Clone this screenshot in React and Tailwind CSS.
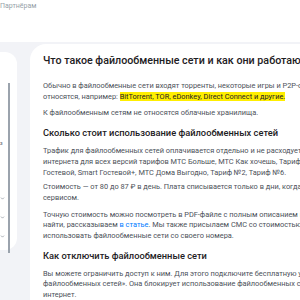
import React from 'react';
import { ChevronDown } from 'lucide-react';

const FONT = { fontFamily: 'Roboto, "Noto Sans", sans-serif' };

function Line({ children }) {
  return <div className="whitespace-nowrap leading-[10.7px]">{children}</div>;
}

function Para({ lines, className = '' }) {
  return (
    <div className={`text-[7.4px] text-[#4c5159] ${className}`}>
      {lines.map((l, i) => (
        <Line key={i}>{l}</Line>
      ))}
    </div>
  );
}

function SubHeading({ children }) {
  return (
    <h2 className="mt-[7px] text-[9.3px] font-medium text-[#1d2023] whitespace-nowrap leading-[14px]">{children}</h2>
  );
}

export default function App() {
  return (
    <div className="w-[300px] h-[300px] overflow-hidden bg-[#f2f3f7]" style={FONT}>
      <div className="h-[42px] bg-white">
        <div className="pt-[1px] text-[7px] text-[#969fa8] whitespace-nowrap">Партнёрам</div>
      </div>
      <div className="flex gap-[13px]">
        <aside className="mt-[10px] w-[17px] h-[198px] shrink-0 rounded-r-xl bg-white flex pt-[31px]">
          <div className="w-[8px] flex flex-col items-start text-[#626c77]">
            <div className="mt-[58px] text-[5px] leading-none">з</div>
            <div className="mt-[50px] flex flex-col gap-[14px]">
              <ChevronDown size={5} strokeWidth={2.5} />
              <ChevronDown size={5} strokeWidth={2.5} />
              <ChevronDown size={5} strokeWidth={2.5} />
            </div>
          </div>
          <div className="w-[2px] h-[170px] bg-[#9ba3ad]" />
        </aside>
        <main className="mt-[2px] flex-1 min-w-0 rounded-tl-2xl bg-white pl-[13px] pt-[9px] h-[300px]">
          <h1 className="text-[10.7px] font-medium text-[#1d2023] whitespace-nowrap leading-[16px]">
            Что такое файлообменные сети и как они работают
          </h1>
          <Para
            className="mt-[12px]"
            lines={[
              'Обычно в файлообменные сети входят торренты, некоторые игры и P2P-сервисы. К ним',
              <>
                относятся, например:{' '}
                <span className="bg-[#ffee00] text-[#1d2023]">BitTorrent, TOR, eDonkey, Direct Connect и другие.</span>
              </>,
            ]}
          />
          <Para className="mt-[6px]" lines={['К файлообменным сетям не относятся облачные хранилища.']} />
          <SubHeading>Сколько стоит использование файлообменных сетей</SubHeading>
          <Para
            className="mt-[6px]"
            lines={[
              'Трафик для файлообменных сетей оплачивается отдельно и не расходует ГБ пакета',
              'интернета для всех версий тарифов МТС Больше, МТС Как хочешь, Тарифище,',
              'Гостевой, Smart Гостевой+, МТС Дома Выгодно, Тариф №2, Тариф №6.',
            ]}
          />
          <Para
            className="mt-[4px]"
            lines={['Стоимость — от 80 до 87 ₽ в день. Плата списывается только в дни, когда вы пользуетесь', 'сервисом.']}
          />
          <Para
            className="mt-[6px]"
            lines={[
              'Точную стоимость можно посмотреть в PDF-файле с полным описанием вашего тарифа. Как его',
              <>
                найти, рассказываем <span className="text-[#007cff]">в статье</span>. Мы также присылаем СМС со стоимостью услуги, если',
              </>,
              'использовать файлообменные сети со своего номера.',
            ]}
          />
          <SubHeading>Как отключить файлообменные сети</SubHeading>
          <Para
            className="mt-[6px]"
            lines={[
              'Вы можете ограничить доступ к ним. Для этого подключите бесплатную услугу «Запрет',
              'файлообменных сетей». Она блокирует использование файлообменных сетей через мобильный',
              'интернет.',
            ]}
          />
        </main>
      </div>
    </div>
  );
}
